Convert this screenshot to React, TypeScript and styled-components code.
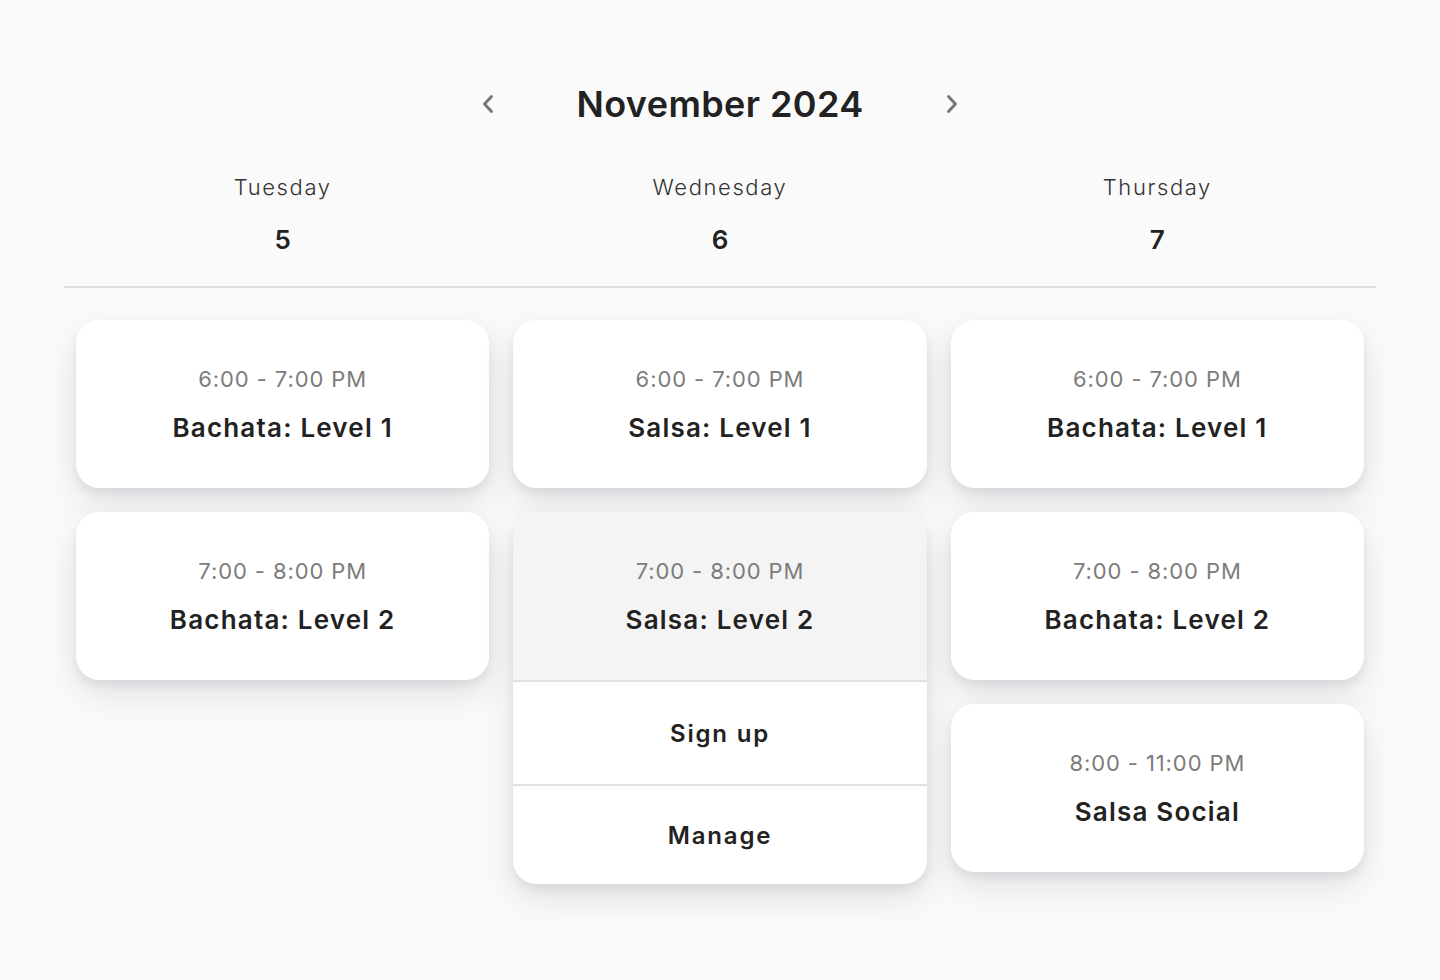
import React, { useState } from "react";
import styled, { createGlobalStyle } from "styled-components";

const GlobalStyle = createGlobalStyle`
  html, body {
    margin: 0;
    padding: 0;
    background: #fafafa;
    font-family: Inter, "Open Sans", "Liberation Sans", sans-serif;
    color: #222;
  }
  * { box-sizing: border-box; }
`;

//#region STYLES
const Page = styled.div`
  min-height: 980px;
  padding: 72px 64px 0;
  background: #fafafa;
`;

const MonthBar = styled.div`
  display: flex;
  align-items: center;
  justify-content: center;
  height: 64px;
`;

const NavButton = styled.button`
  width: 40px;
  height: 40px;
  display: flex;
  align-items: center;
  justify-content: center;
  border: none;
  background: transparent;
  padding: 0;
  cursor: pointer;
  color: #777;
`;

const MonthTitle = styled.h1`
  width: 424px;
  margin: 0;
  text-align: center;
  font-size: 36px;
  font-weight: 600;
  letter-spacing: 0.4px;
  color: #222;
`;

const DayHeader = styled.div`
  display: grid;
  grid-template-columns: repeat(3, 1fr);
  padding-top: 36px;
  padding-bottom: 29px;
  border-bottom: 2px solid #dedede;
`;

const DayCell = styled.div`
  display: flex;
  flex-direction: column;
  align-items: center;
`;

const DayName = styled.div`
  font-size: 22px;
  font-weight: 300;
  line-height: 30px;
  letter-spacing: 1.6px;
  color: #333;
`;

const DayNumber = styled.div`
  margin-top: 21px;
  font-size: 26px;
  font-weight: 600;
  line-height: 34px;
  color: #222;
`;

const Columns = styled.div`
  display: grid;
  grid-template-columns: repeat(3, 1fr);
  padding-top: 32px;
`;

const Column = styled.div`
  display: flex;
  flex-direction: column;
  gap: 24px;
  padding: 0 12px;
`;

const Card = styled.div`
  background: #fff;
  border-radius: 24px;
  overflow: hidden;
  box-shadow: 0 6px 10px rgba(20, 20, 40, 0.07), 0 14px 36px rgba(20, 20, 40, 0.1);
`;

const CardHead = styled.div<{ $open?: boolean }>`
  display: flex;
  flex-direction: column;
  align-items: center;
  gap: 18px;
  padding: 44px 16px;
  background: ${p => (p.$open ? "#f4f4f4" : "#fff")};
  cursor: pointer;
`;

const Time = styled.div`
  font-size: 22px;
  line-height: 30px;
  font-weight: 400;
  letter-spacing: 0.9px;
  color: #7c7c7c;
`;

const Title = styled.div`
  font-size: 26px;
  line-height: 32px;
  font-weight: 600;
  letter-spacing: 1.2px;
  color: #222;
`;

const Action = styled.button`
  display: block;
  width: 100%;
  height: 104px;
  border: none;
  border-top: 2px solid #e2e2e2;
  background: #fff;
  font-family: inherit;
  font-size: 24px;
  font-weight: 600;
  letter-spacing: 1.8px;
  color: #222;
  cursor: pointer;

  &:last-child {
    height: 100px;
  }
`;
//#endregion

type Lesson = { time: string; name: string };
type Day = { name: string; date: number; lessons: Lesson[] };

const days: Day[] = [
  {
    name: "Tuesday",
    date: 5,
    lessons: [
      { time: "6:00 - 7:00 PM", name: "Bachata: Level 1" },
      { time: "7:00 - 8:00 PM", name: "Bachata: Level 2" },
    ],
  },
  {
    name: "Wednesday",
    date: 6,
    lessons: [
      { time: "6:00 - 7:00 PM", name: "Salsa: Level 1" },
      { time: "7:00 - 8:00 PM", name: "Salsa: Level 2" },
    ],
  },
  {
    name: "Thursday",
    date: 7,
    lessons: [
      { time: "6:00 - 7:00 PM", name: "Bachata: Level 1" },
      { time: "7:00 - 8:00 PM", name: "Bachata: Level 2" },
      { time: "8:00 - 11:00 PM", name: "Salsa Social" },
    ],
  },
];

const Chevron = ({ dir }: { dir: "left" | "right" }) => (
  <svg width="14" height="22" viewBox="0 0 14 22" fill="none">
    <path
      d={dir === "left" ? "M10.5 3.5 L3.5 11 L10.5 18.5" : "M3.5 3.5 L10.5 11 L3.5 18.5"}
      stroke="currentColor"
      strokeWidth="3"
      strokeLinecap="round"
      strokeLinejoin="round"
    />
  </svg>
);

const App = () => {
  const [open, setOpen] = useState<string | null>("1-1");

  return (
    <Page>
      <GlobalStyle />
      <MonthBar>
        <NavButton aria-label="Previous month">
          <Chevron dir="left" />
        </NavButton>
        <MonthTitle>November 2024</MonthTitle>
        <NavButton aria-label="Next month">
          <Chevron dir="right" />
        </NavButton>
      </MonthBar>

      <DayHeader>
        {days.map(d => (
          <DayCell key={d.name}>
            <DayName>{d.name}</DayName>
            <DayNumber>{d.date}</DayNumber>
          </DayCell>
        ))}
      </DayHeader>

      <Columns>
        {days.map((d, di) => (
          <Column key={d.name}>
            {d.lessons.map((l, li) => {
              const key = `${di}-${li}`;
              const isOpen = open === key;
              return (
                <Card key={key}>
                  <CardHead $open={isOpen} onClick={() => setOpen(isOpen ? null : key)}>
                    <Time>{l.time}</Time>
                    <Title>{l.name}</Title>
                  </CardHead>
                  {isOpen && (
                    <>
                      <Action>Sign up</Action>
                      <Action>Manage</Action>
                    </>
                  )}
                </Card>
              );
            })}
          </Column>
        ))}
      </Columns>
    </Page>
  );
};

export default App;
